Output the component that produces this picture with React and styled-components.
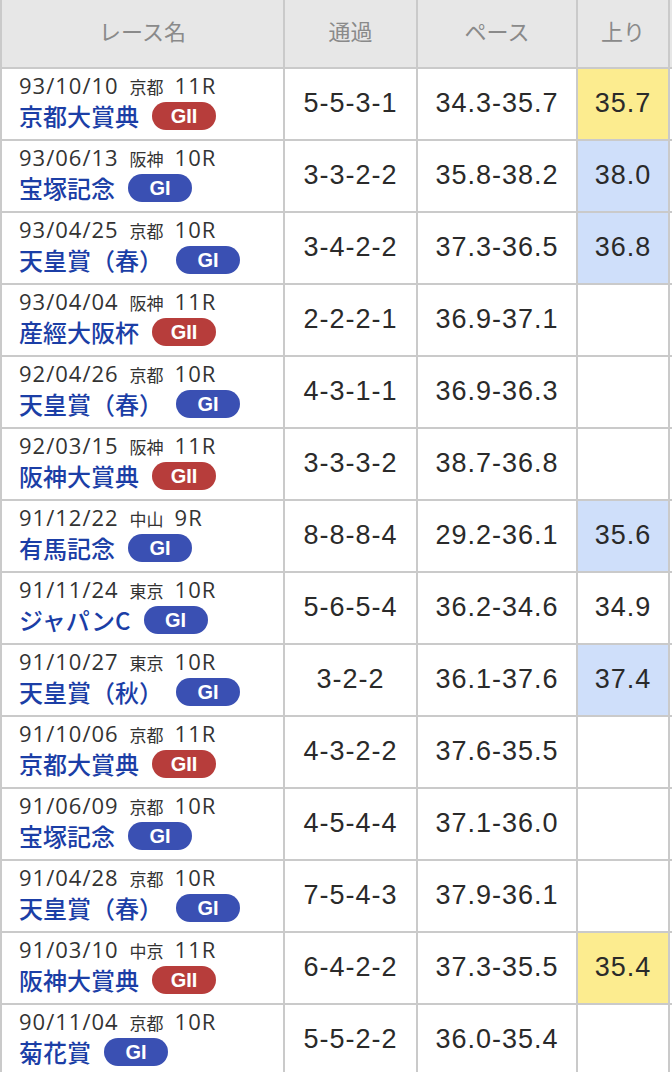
import styled, { createGlobalStyle } from "styled-components";

const GlobalStyle = createGlobalStyle`
  html, body {
    margin: 0;
    padding: 0;
    background: #fff;
    overflow: hidden;
  }
  body {
    font-family: "Noto Sans CJK JP", "Noto Sans", sans-serif;
  }
`;

const races = [
  { date: "93/10/10", place: "京都", r: "11R", name: "京都大賞典", grade: "GII", pass: "5-5-3-1", pace: "34.3-35.7", last: "35.7", mark: "top" },
  { date: "93/06/13", place: "阪神", r: "10R", name: "宝塚記念", grade: "GI", pass: "3-3-2-2", pace: "35.8-38.2", last: "38.0", mark: "good" },
  { date: "93/04/25", place: "京都", r: "10R", name: "天皇賞（春）", grade: "GI", pass: "3-4-2-2", pace: "37.3-36.5", last: "36.8", mark: "good" },
  { date: "93/04/04", place: "阪神", r: "11R", name: "産經大阪杯", grade: "GII", pass: "2-2-2-1", pace: "36.9-37.1", last: "" },
  { date: "92/04/26", place: "京都", r: "10R", name: "天皇賞（春）", grade: "GI", pass: "4-3-1-1", pace: "36.9-36.3", last: "" },
  { date: "92/03/15", place: "阪神", r: "11R", name: "阪神大賞典", grade: "GII", pass: "3-3-3-2", pace: "38.7-36.8", last: "" },
  { date: "91/12/22", place: "中山", r: "9R", name: "有馬記念", grade: "GI", pass: "8-8-8-4", pace: "29.2-36.1", last: "35.6", mark: "good" },
  { date: "91/11/24", place: "東京", r: "10R", name: "ジャパンC", grade: "GI", pass: "5-6-5-4", pace: "36.2-34.6", last: "34.9" },
  { date: "91/10/27", place: "東京", r: "10R", name: "天皇賞（秋）", grade: "GI", pass: "3-2-2", pace: "36.1-37.6", last: "37.4", mark: "good" },
  { date: "91/10/06", place: "京都", r: "11R", name: "京都大賞典", grade: "GII", pass: "4-3-2-2", pace: "37.6-35.5", last: "" },
  { date: "91/06/09", place: "京都", r: "10R", name: "宝塚記念", grade: "GI", pass: "4-5-4-4", pace: "37.1-36.0", last: "" },
  { date: "91/04/28", place: "京都", r: "10R", name: "天皇賞（春）", grade: "GI", pass: "7-5-4-3", pace: "37.9-36.1", last: "" },
  { date: "91/03/10", place: "中京", r: "11R", name: "阪神大賞典", grade: "GII", pass: "6-4-2-2", pace: "37.3-35.5", last: "35.4", mark: "top" },
  { date: "90/11/04", place: "京都", r: "10R", name: "菊花賞", grade: "GI", pass: "5-5-2-2", pace: "36.0-35.4", last: "" },
];

const markColors = {
  top: "#fcec8f",
  good: "#cfdffa",
};

const Table = styled.div`
  display: grid;
  grid-template-columns: 281px 131px 158px 90px 80px;
  grid-auto-rows: 70px;
  grid-template-rows: 67px;
  gap: 2px;
  padding: 0 2px 2px;
  width: max-content;
  background: #cacaca;
`;

const HeadCell = styled.div`
  display: flex;
  align-items: center;
  justify-content: center;
  background: #e7e7e7;
  color: #8a8a8a;
  font-size: 22px;
  padding-bottom: 7px;
`;

const RaceCell = styled.div`
  display: flex;
  flex-direction: column;
  justify-content: center;
  gap: 1px;
  padding: 0 0 5px 17px;
  background: #fff;
`;

const DateLine = styled.div`
  display: flex;
  align-items: baseline;
  gap: 11px;
  color: #333;
  font-family: "Open Sans", "Noto Sans CJK JP", sans-serif;
  font-size: 22px;
  line-height: 26px;
  letter-spacing: 1px;
`;

const Place = styled.span`
  font-family: "Noto Sans CJK JP", sans-serif;
  font-size: 17px;
  letter-spacing: 0;
`;

const NameLine = styled.div`
  display: flex;
  align-items: center;
  height: 30px;
`;

const RaceName = styled.span`
  color: #1b3ea6;
  font-size: 24px;
  font-weight: 500;
  line-height: 30px;
`;

const Badge = styled.span`
  display: inline-flex;
  align-items: center;
  justify-content: center;
  width: 64px;
  height: 28px;
  margin-left: 13px;
  border-radius: 14px;
  background: ${(p) => (p.$grade === "GII" ? "#b73d3b" : "#3a50b3")};
  color: #fff;
  font-family: "Liberation Sans", Arial, sans-serif;
  font-size: 20px;
  font-weight: 700;
`;

const NumCell = styled.div`
  display: flex;
  align-items: center;
  justify-content: center;
  background: ${(p) => p.$bg || "#fff"};
  color: #2a2a2a;
  font-family: "Liberation Sans", Arial, sans-serif;
  font-size: 27px;
  letter-spacing: 1px;
  padding-bottom: 1px;
`;

export default function App() {
  return (
    <>
      <GlobalStyle />
      <Table>
        <HeadCell>レース名</HeadCell>
        <HeadCell>通過</HeadCell>
        <HeadCell>ペース</HeadCell>
        <HeadCell>上り</HeadCell>
        <HeadCell />
        {races.map((race, i) => [
          <RaceCell key={`r${i}`}>
            <DateLine>
              <span>{race.date}</span>
              <Place>{race.place}</Place>
              <span>{race.r}</span>
            </DateLine>
            <NameLine>
              <RaceName>{race.name}</RaceName>
              <Badge $grade={race.grade}>{race.grade}</Badge>
            </NameLine>
          </RaceCell>,
          <NumCell key={`p${i}`}>{race.pass}</NumCell>,
          <NumCell key={`c${i}`}>{race.pace}</NumCell>,
          <NumCell key={`l${i}`} $bg={markColors[race.mark]}>
            {race.last}
          </NumCell>,
          <NumCell key={`x${i}`} />,
        ])}
      </Table>
    </>
  );
}
